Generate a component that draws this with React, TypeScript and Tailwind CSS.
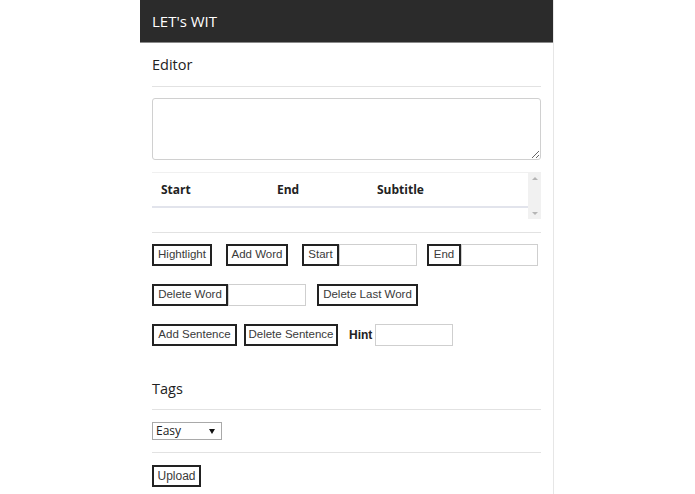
import React from 'react';

const btn =
  "h-[22px] border-2 border-[#222] bg-white text-[11.5px] text-[#3a3a3a] font-['Liberation_Sans',Arial,sans-serif] flex items-center justify-center shrink-0";
const field = 'h-[22px] border border-[#cfcfcf] bg-white shrink-0';

const App = () => {
  return (
    <div className="min-h-[494px] bg-white font-['Open_Sans','Noto_Sans',sans-serif]">
      <div className="ml-[140px] w-[414px] min-h-[494px] border-r border-[#e6e6e6]">
        {/* top bar */}
        <div className="h-[43px] bg-[#2b2b2b] border-b border-[#8a8a8a] flex items-center px-3">
          <span className="text-white text-[15px] leading-none">LET's WIT</span>
        </div>

        <div className="px-3">
          {/* Editor */}
          <h2 className="mt-[12px] text-[14.5px] leading-[20px] text-[#222]">Editor</h2>
          <div className="mt-[11px] border-t border-[#e2e2e2]" />
          <textarea className="mt-[11px] block w-full h-[62px] border border-[#d0d0d0] rounded-[3px] resize-y outline-none" />

          {/* subtitle table */}
          <div className="mt-[12px] h-[47px] flex border-t border-[#f0f0f0]">
            <div className="flex-1">
              <div className="h-[35px] grid grid-cols-[116px_100px_1fr] items-center border-b-2 border-[#e2e4ec] text-[12px] font-bold text-[#222]">
                <span className="pl-[9px]">Start</span>
                <span className="pl-[9px]">End</span>
                <span className="pl-[9px]">Subtitle</span>
              </div>
            </div>
            <div className="w-[13px] bg-[#f1f1f1] flex flex-col items-center justify-between py-[4px]">
              <span className="w-0 h-0 border-l-[3px] border-r-[3px] border-b-[3px] border-l-transparent border-r-transparent border-b-[#b5b5b5]" />
              <span className="w-0 h-0 border-l-[3px] border-r-[3px] border-t-[3px] border-l-transparent border-r-transparent border-t-[#b5b5b5]" />
            </div>
          </div>
          <div className="mt-[13px] border-t border-[#e2e2e2]" />

          {/* word controls */}
          <div className="mt-[11px] flex items-center">
            <button className={`${btn} w-[60px]`}>Hightlight</button>
            <button className={`${btn} w-[62px] ml-[14px]`}>Add Word</button>
            <button className={`${btn} w-[37px] ml-[14px]`}>Start</button>
            <input className={`${field} w-[78px]`} />
            <button className={`${btn} w-[34px] ml-[10px]`}>End</button>
            <input className={`${field} w-[77px]`} />
          </div>

          <div className="mt-[18px] flex items-center">
            <button className={`${btn} w-[76px]`}>Delete Word</button>
            <input className={`${field} w-[78px]`} />
            <button className={`${btn} w-[101px] ml-[11px]`}>Delete Last Word</button>
          </div>

          <div className="mt-[18px] flex items-center">
            <button className={`${btn} w-[85px]`}>Add Sentence</button>
            <button className={`${btn} w-[94px] ml-[7px]`}>Delete Sentence</button>
            <span className="ml-[11px] text-[12px] font-bold text-[#222] font-['Liberation_Sans',Arial,sans-serif]">Hint</span>
            <input className={`${field} w-[78px] ml-[3px]`} />
          </div>

          {/* Tags */}
          <h2 className="mt-[33px] text-[14.5px] leading-[20px] text-[#222]">Tags</h2>
          <div className="mt-[10px] border-t border-[#e2e2e2]" />
          <div className="mt-[12px] w-[70px] h-[18px] border border-[#a9a9a9] flex items-center justify-between px-[3px] text-[12px] text-[#222]">
            <span>Easy</span>
            <span className="mr-[3px] w-0 h-0 border-l-[3px] border-r-[3px] border-t-[5px] border-l-transparent border-r-transparent border-t-[#111]" />
          </div>
          <div className="mt-[12px] border-t border-[#e2e2e2]" />
          <button className={`${btn} mt-[12px] w-[49px] h-[21px] text-[12px]`}>Upload</button>
        </div>
      </div>
    </div>
  );
};

export default App;
